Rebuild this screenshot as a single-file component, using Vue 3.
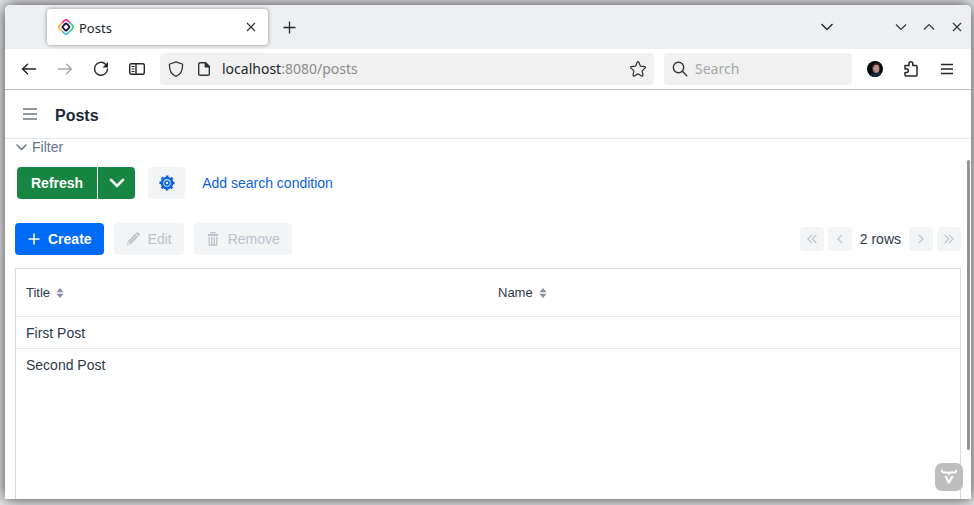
<script setup>
import { ref } from 'vue'

const rows = ref([
  { title: 'First Post', name: '' },
  { title: 'Second Post', name: '' },
])
const columns = ['Title', 'Name']
const search = ref('')
</script>

<template>
  <div class="desktop">
    <div class="window">
      <header class="tabstrip">
        <div class="tab">
          <svg class="favicon" width="16" height="16" viewBox="0 0 16 16" fill="none" stroke-width="1.6" stroke-linecap="round" stroke-linejoin="round">
            <path d="M4.3 3.6 6.6 1.3Q8 .2 9.4 1.3L11.7 3.6" stroke="#f7257e" />
            <path d="M12.4 4.3 14.7 6.6Q15.8 8 14.7 9.4L12.4 11.7" stroke="#33d17a" />
            <path d="M11.7 12.4 9.4 14.7Q8 15.8 6.6 14.7L4.3 12.4" stroke="#35c5e0" />
            <path d="M3.6 11.7 1.3 9.4Q.2 8 1.3 6.6L3.6 4.3" stroke="#ffb13b" />
            <rect x="5.2" y="5.2" width="5.6" height="5.6" rx="1" transform="rotate(45 8 8)" stroke="#1d1646" stroke-width="1.8" />
          </svg>
          <span class="tab-title">Posts</span>
          <button class="plain tab-close" aria-label="Close tab">
            <svg width="10" height="10" viewBox="0 0 10 10" fill="none" stroke="#2b2f33" stroke-width="1.1"><path d="m1 1 8 8M9 1 1 9" /></svg>
          </button>
        </div>
        <button class="plain new-tab" aria-label="New tab">
          <svg width="13" height="13" viewBox="0 0 13 13" fill="none" stroke="#232629" stroke-width="1.3"><path d="M6.500.5v12M.5 6.500h12" /></svg>
        </button>
        <div class="window-controls">
          <button class="plain all-tabs" aria-label="List all tabs">
            <svg width="14" height="8" viewBox="0 0 14 8" fill="none" stroke="#232629" stroke-width="1.4"><path d="m1.500 1 5.500 5.500 5.500-5.500" /></svg>
          </button>
          <button class="plain" aria-label="Minimize">
            <svg width="12" height="8" viewBox="0 0 12 8" fill="none" stroke="#31363b" stroke-width="1.2"><path d="m1 1.500 5 5 5-5" /></svg>
          </button>
          <button class="plain" aria-label="Maximize">
            <svg width="12" height="8" viewBox="0 0 12 8" fill="none" stroke="#31363b" stroke-width="1.2"><path d="m1 6.500 5-5 5 5" /></svg>
          </button>
          <button class="plain" aria-label="Close window">
            <svg width="12" height="10" viewBox="0 0 12 10" fill="none" stroke="#31363b" stroke-width="1.2"><path d="m2 1 8 8M10 1 2 9" /></svg>
          </button>
        </div>
      </header>

      <nav class="navbar">
        <div class="nav-buttons">
          <button class="plain" aria-label="Back">
            <svg width="16" height="16" viewBox="0 0 16 16" fill="none" stroke="#232629" stroke-width="1.5" stroke-linecap="round" stroke-linejoin="round"><path d="M14.500 8H1.800M6.500 3.300 1.500 8 6.500 12.700" /></svg>
          </button>
          <button class="plain" aria-label="Forward" disabled>
            <svg width="16" height="16" viewBox="0 0 16 16" fill="none" stroke="#a7a8a9" stroke-width="1.500" stroke-linecap="round" stroke-linejoin="round"><path d="M1.500 8h12.700M9.500 3.300 14.500 8 9.500 12.700" /></svg>
          </button>
          <button class="plain" aria-label="Reload">
            <svg width="16" height="16" viewBox="0 0 16 16"><path d="M12.600 3.200A6.500 6.500 0 1 0 14.500 8" fill="none" stroke="#232629" stroke-width="1.400" stroke-linecap="round" /><path d="M15 1v5.500H9.500z" fill="#232629" /></svg>
          </button>
          <button class="plain" aria-label="Sidebars">
            <svg width="16" height="14" viewBox="0 0 16 14" fill="none" stroke="#232629"><rect x=".7" y="1.700" width="14.600" height="10.600" rx="1.500" stroke-width="1.400" /><path d="M7 2v10" stroke-width="1.400" /><path d="M2.500 4.500h3M2.500 7h3M2.500 9.500h3" stroke-width="1" /></svg>
          </button>
        </div>
        <div class="urlbar">
          <svg width="16" height="18" viewBox="0 0 16 18" fill="none" stroke="#333639" stroke-width="1.300" stroke-linejoin="round"><path d="M8 1.800 14 4c.4 0 .6.3.6.700 0 5.500-1.800 9.800-6.600 11.700C3.200 14.500 1.400 10.200 1.400 4.700c0-.4.2-.7.6-.700z" /></svg>
          <svg class="page-icon" width="14" height="16" viewBox="0 0 14 16" fill="none" stroke="#333639" stroke-width="1.400" stroke-linejoin="round"><path d="M3 1.700h5.500L12.300 5.500V13a1.300 1.300 0 0 1-1.300 1.300H3A1.300 1.300 0 0 1 1.700 13V3A1.300 1.300 0 0 1 3 1.700z" /><path d="M8.300 1.500v4.200h4.200z" fill="#333639" /></svg>
          <span class="url"><b>localhost</b>:8080/posts</span>
          <button class="plain star" aria-label="Bookmark this page">
            <svg width="18" height="18" viewBox="0 0 18 18" fill="none" stroke="#333639" stroke-width="1.300" stroke-linejoin="round"><path d="M8.200 2.300Q9 1 9.800 2.300L11.500 6.200 15.600 6.700Q17 7 16 8.100L13.100 10.900 13.900 15Q14 16.600 12.600 16L9 13.900 5.400 16Q4 16.600 4.100 15L4.900 10.900 2 8.100Q1 7 2.400 6.700L6.500 6.200z" /></svg>
          </button>
        </div>
        <label class="searchbar">
          <svg width="16" height="16" viewBox="0 0 16 16" fill="none" stroke="#333639" stroke-width="1.400" stroke-linecap="round"><circle cx="6.500" cy="6.500" r="5.200" /><path d="m10.300 10.300 4.500 4.500" /></svg>
          <input v-model="search" type="text" placeholder="Search" aria-label="Search" />
        </label>
        <div class="nav-tools">
          <button class="plain" aria-label="Account">
            <svg width="16" height="16" viewBox="0 0 16 16">
              <defs><clipPath id="face"><circle cx="8" cy="8" r="8" /></clipPath></defs>
              <g clip-path="url(#face)">
                <rect width="16" height="16" fill="#07080b" />
                <path d="M2 16q1-4 5-4.500l6-.5q3 2 3 5z" fill="#17263d" />
                <ellipse cx="9" cy="7.500" rx="3.400" ry="4.400" fill="#b89289" />
                <path d="M5.500 5q.5-3 4-3 3 .2 3 3-1.500-1.500-3.500-1.300Q6.500 4 6.200 7z" fill="#34201d" />
                <path d="M6.500 8q1 3.500 3 4-2.500.5-3.500-2z" fill="#6d4b48" />
              </g>
            </svg>
          </button>
          <button class="plain" aria-label="Extensions">
            <svg width="16" height="18" viewBox="0 0 16 18" fill="none" stroke="#232629" stroke-width="1.500" stroke-linejoin="round"><path d="M2 5.500h4V3.700a1.900 1.900 0 0 1 3.800 0v1.800H13a1 1 0 0 1 1 1V15a1 1 0 0 1-1 1H3a1 1 0 0 1-1-1v-2.500h1.700a1.700 1.700 0 0 0 0-3.400H2z" /></svg>
          </button>
          <button class="plain" aria-label="Open menu">
            <svg width="16" height="12" viewBox="0 0 16 12" stroke="#232629" stroke-width="1.300"><path d="M2 1.500h12M2 6h12M2 10.500h12" /></svg>
          </button>
        </div>
      </nav>

      <div class="app">
        <header class="app-header">
          <button class="plain" aria-label="Toggle menu">
            <svg width="14" height="12" viewBox="0 0 14 12" stroke="#6b7686" stroke-width="1.600"><path d="M0 1h14M0 6h14M0 11h14" /></svg>
          </button>
          <h1>Posts</h1>
        </header>

        <main class="view">
          <button class="plain filter-toggle">
            <svg width="11" height="7" viewBox="0 0 11 7" fill="none" stroke="#6b7686" stroke-width="1.500" stroke-linecap="round"><path d="m1 1 4.500 4.500L10 1" /></svg>
            Filter
          </button>

          <div class="filter-row">
            <div class="split">
              <button class="btn success">Refresh</button>
              <button class="btn success arrow" aria-label="Refresh options">
                <svg width="16" height="10" viewBox="0 0 16 10" fill="none" stroke="#fff" stroke-width="2.600" stroke-linecap="round"><path d="m2 1.800 6 6 6-6" /></svg>
              </button>
            </div>
            <button class="btn settings" aria-label="Filter settings">
              <svg width="16" height="16" viewBox="0 0 16 16" fill="none" stroke="#0a63dc"><circle cx="8" cy="8" r="5" stroke-width="2.600" /><circle cx="8" cy="8" r="6.700" stroke-width="1.800" stroke-dasharray="2.630" stroke-dashoffset="1.315" /><circle cx="8" cy="8" r="2" stroke-width="1.700" /></svg>
            </button>
            <a class="add-condition" href="#">Add search condition</a>
          </div>

          <div class="actions">
            <button class="btn primary">
              <svg width="12" height="12" viewBox="0 0 12 12" stroke="#fff" stroke-width="1.600"><path d="M6 .5v11M.5 6h11" /></svg>
              Create
            </button>
            <button class="btn" disabled>
              <svg width="14" height="16" viewBox="0 0 16 16" fill="#bcc3cd"><path d="m1 15 1.300-4.700L10.500 2 14 5.500l-8.300 8.200zM11.200 1.300l.8-.8q.9-.7 1.800 0l1.700 1.700q.7.900 0 1.800l-.8.8z" /><path d="m4 11.500 7.500-7.500" stroke="#f3f4f6" stroke-width=".8" /><path d="m1.800 14.200.8-2.700 1.900 1.900z" fill="#f3f4f6" /></svg>
              Edit
            </button>
            <button class="btn" disabled>
              <svg width="14" height="14" viewBox="0 0 14 14" fill="none" stroke="#bcc3cd"><path d="M5 1.500V.6h4v.9" stroke-width="1.200" /><path d="M2 3h10" stroke-width="2.200" /><path d="M3.200 5v8h7.600V5M5.700 5v7.500M8.300 5v7.500" stroke-width="1.300" /></svg>
              Remove
            </button>
            <div class="pagination">
              <button class="page-btn" disabled aria-label="First page"><svg width="10" height="10" viewBox="0 0 10 10"><path d="M5 .8.900 5 5 9.200M9.400.800 5.300 5l4.100 4.200" /></svg></button>
              <button class="page-btn" disabled aria-label="Previous page"><svg width="10" height="10" viewBox="0 0 10 10"><path d="M7.200.800 3 5l4.200 4.200" /></svg></button>
              <span>2 rows</span>
              <button class="page-btn" disabled aria-label="Next page"><svg width="10" height="10" viewBox="0 0 10 10"><path d="M2.800.800 7 5 2.800 9.200" /></svg></button>
              <button class="page-btn" disabled aria-label="Last page"><svg width="10" height="10" viewBox="0 0 10 10"><path d="M.6.800 4.700 5 .6 9.200M5 .8 9.100 5 5 9.200" /></svg></button>
            </div>
          </div>

          <div class="grid">
            <table>
              <thead>
                <tr>
                  <th v-for="column in columns" :key="column" scope="col">
                    <button class="plain sorter">
                      {{ column }}
                      <svg width="8" height="10" viewBox="0 0 8 10" fill="#8791a1"><path d="M4 0 7.600 4.200H.4zM4 10 .4 5.800h7.200z" /></svg>
                    </button>
                  </th>
                </tr>
              </thead>
              <tbody>
                <tr v-for="row in rows" :key="row.title">
                  <td>{{ row.title }}</td>
                  <td>{{ row.name }}</td>
                </tr>
              </tbody>
            </table>
          </div>
        </main>

        <div class="scroll-thumb"></div>
        <button class="dev-badge" aria-label="Development tools">
          <svg width="16" height="16" viewBox="0 0 16 16" fill="none" stroke="#fff" stroke-linecap="round" stroke-linejoin="round"><path d="M1 1.500v.8q0 1.200 1.200 1.200h3.900Q8 3.500 8 5q0-1.500 1.900-1.500h3.900q1.200 0 1.200-1.200v-.8" stroke-width="1.900" /><path d="M4.800 7.800 8 13.500l3.200-5.700" stroke-width="2.200" /></svg>
        </button>
      </div>
    </div>
  </div>
</template>

<style>
body {
  margin: 0;
}
</style>

<style scoped>
* {
  box-sizing: border-box;
}
.desktop {
  height: 100vh;
  padding: 5px 3px 6px 5px;
  background: #e6e7e9;
  overflow: hidden;
  font-family: "Liberation Sans", Arial, sans-serif;
  font-size: 14px;
  line-height: 20px;
  color: #2c394b;
}
.window {
  height: 100%;
  display: flex;
  flex-direction: column;
  border-radius: 5px 5px 0 0;
  background: #fff;
  box-shadow: 0 0 16px rgba(0, 0, 0, 0.75);
}
svg {
  display: block;
  flex: none;
}
button {
  font: inherit;
  color: inherit;
}
.plain {
  display: flex;
  align-items: center;
  justify-content: center;
  padding: 0;
  border: 0;
  background: none;
}

/* Browser chrome */
.tabstrip {
  flex: none;
  display: flex;
  align-items: center;
  height: 44px;
  padding: 0 8px 0 42px;
  border-radius: 5px 5px 0 0;
  background: #eeeff1;
  font-family: "Noto Sans", sans-serif;
  font-size: 13px;
}
.tab {
  display: flex;
  align-items: center;
  gap: 5px;
  width: 221px;
  height: 36px;
  padding: 0 12px 0 11px;
  border-radius: 4px;
  background: #fff;
  box-shadow: 0 0 4px rgba(0, 0, 0, 0.4);
  color: #232629;
}
.tab-title {
  padding-top: 2px;
}
.tab-close {
  margin-left: auto;
}
.new-tab {
  margin-left: 15px;
}
.window-controls {
  display: flex;
  gap: 16px;
  margin-left: auto;
}
.all-tabs {
  margin-right: 45px;
}
.navbar {
  flex: none;
  display: flex;
  align-items: center;
  gap: 10px;
  height: 41px;
  padding: 0 16px;
  border-bottom: 1px solid #b8b8b8;
  font-family: "Noto Sans", sans-serif;
}
.nav-buttons {
  display: flex;
  gap: 20px;
  width: 129px;
}
.urlbar,
.searchbar {
  display: flex;
  align-items: center;
  height: 32px;
  padding: 0 8px;
  border-radius: 4px;
  background: #f1f1f1;
}
.urlbar {
  flex: 1;
  padding-right: 7px;
}
.page-icon {
  margin-left: 13px;
}
.url {
  margin-left: 11px;
  color: #8b8c8e;
}
.url b {
  font-weight: 400;
  color: #232629;
}
.star {
  margin-left: auto;
}
.searchbar {
  gap: 7px;
  width: 188px;
}
.searchbar input {
  flex: 1;
  min-width: 0;
  padding: 0;
  border: 0;
  outline: 0;
  background: none;
  font: inherit;
  color: #232629;
}
.searchbar input::placeholder {
  color: #a5a6a7;
  opacity: 1;
}
.nav-tools {
  display: flex;
  align-items: center;
  gap: 20px;
  margin-left: 5px;
}

/* Application */
.app {
  position: relative;
  flex: 1;
  min-height: 0;
  display: flex;
  flex-direction: column;
}
.app-header {
  flex: none;
  display: flex;
  align-items: center;
  gap: 18px;
  height: 49px;
  padding: 0 18px;
  border-bottom: 1px solid #e4e7eb;
}
h1 {
  margin: 4px 0 0;
  font-size: 16px;
  font-weight: 700;
  color: #1a2636;
}
.view {
  flex: 1;
  min-height: 0;
  display: flex;
  flex-direction: column;
  padding: 0 10px;
}
.filter-toggle {
  align-self: flex-start;
  gap: 5px;
  height: 16px;
  padding-left: 1px;
  color: #68748a;
}
.filter-row {
  display: flex;
  align-items: center;
  margin: 12px 2px 24px;
}
.split {
  display: flex;
  gap: 1px;
  margin-right: 13px;
}
.btn {
  display: flex;
  align-items: center;
  justify-content: center;
  gap: 8px;
  height: 32px;
  padding: 0 12px;
  border: 0;
  border-radius: 4px;
  background: #f3f4f6;
}
.btn:disabled {
  color: #bcc3cd;
}
.success {
  padding: 0 14px;
  border-radius: 4px 0 0 4px;
  background: #178643;
  color: #fff;
  font-weight: 700;
}
.arrow {
  width: 37px;
  padding: 0;
  border-radius: 0 4px 4px 0;
}
.settings {
  width: 37px;
  padding: 0;
}
.add-condition {
  margin-left: 17px;
  color: #0a63dc;
  text-decoration: none;
}
.actions {
  display: flex;
  align-items: center;
  gap: 10px;
  margin-bottom: 13px;
}
.primary {
  padding-left: 13px;
  background: #006af8;
  color: #fff;
  font-weight: 700;
}
.pagination {
  display: flex;
  align-items: center;
  gap: 4px;
  margin-left: auto;
}
.pagination span {
  margin: 0 4px;
}
.page-btn {
  display: flex;
  align-items: center;
  justify-content: center;
  width: 24px;
  height: 24px;
  padding: 0;
  border: 0;
  border-radius: 4px;
  background: #f3f4f6;
}
.page-btn svg {
  fill: none;
  stroke: #bcc3cd;
  stroke-width: 1.2;
}
.grid {
  flex: 1;
  border: 1px solid #d7dade;
  border-bottom: 0;
}
table {
  width: 100%;
  table-layout: fixed;
  border-collapse: separate;
  border-spacing: 0;
}
th {
  height: 48px;
  padding: 0 10px;
  border-bottom: 1px solid #e7e9ed;
  font-size: 13px;
  font-weight: 400;
  text-align: left;
}
.sorter {
  gap: 6px;
}
td {
  height: 32px;
  padding: 0 10px;
  border-bottom: 1px solid #e7e9ed;
}
tbody tr:last-child td {
  border-bottom: 0;
}
.scroll-thumb {
  position: absolute;
  top: 70px;
  right: 1px;
  width: 3px;
  height: 290px;
  border-radius: 2px;
  background: #949494;
}
.dev-badge {
  position: absolute;
  right: 8px;
  bottom: 8px;
  display: flex;
  align-items: center;
  justify-content: center;
  width: 28px;
  height: 28px;
  padding: 0;
  border: 0;
  border-radius: 7px;
  background: #bebebe;
}
</style>
